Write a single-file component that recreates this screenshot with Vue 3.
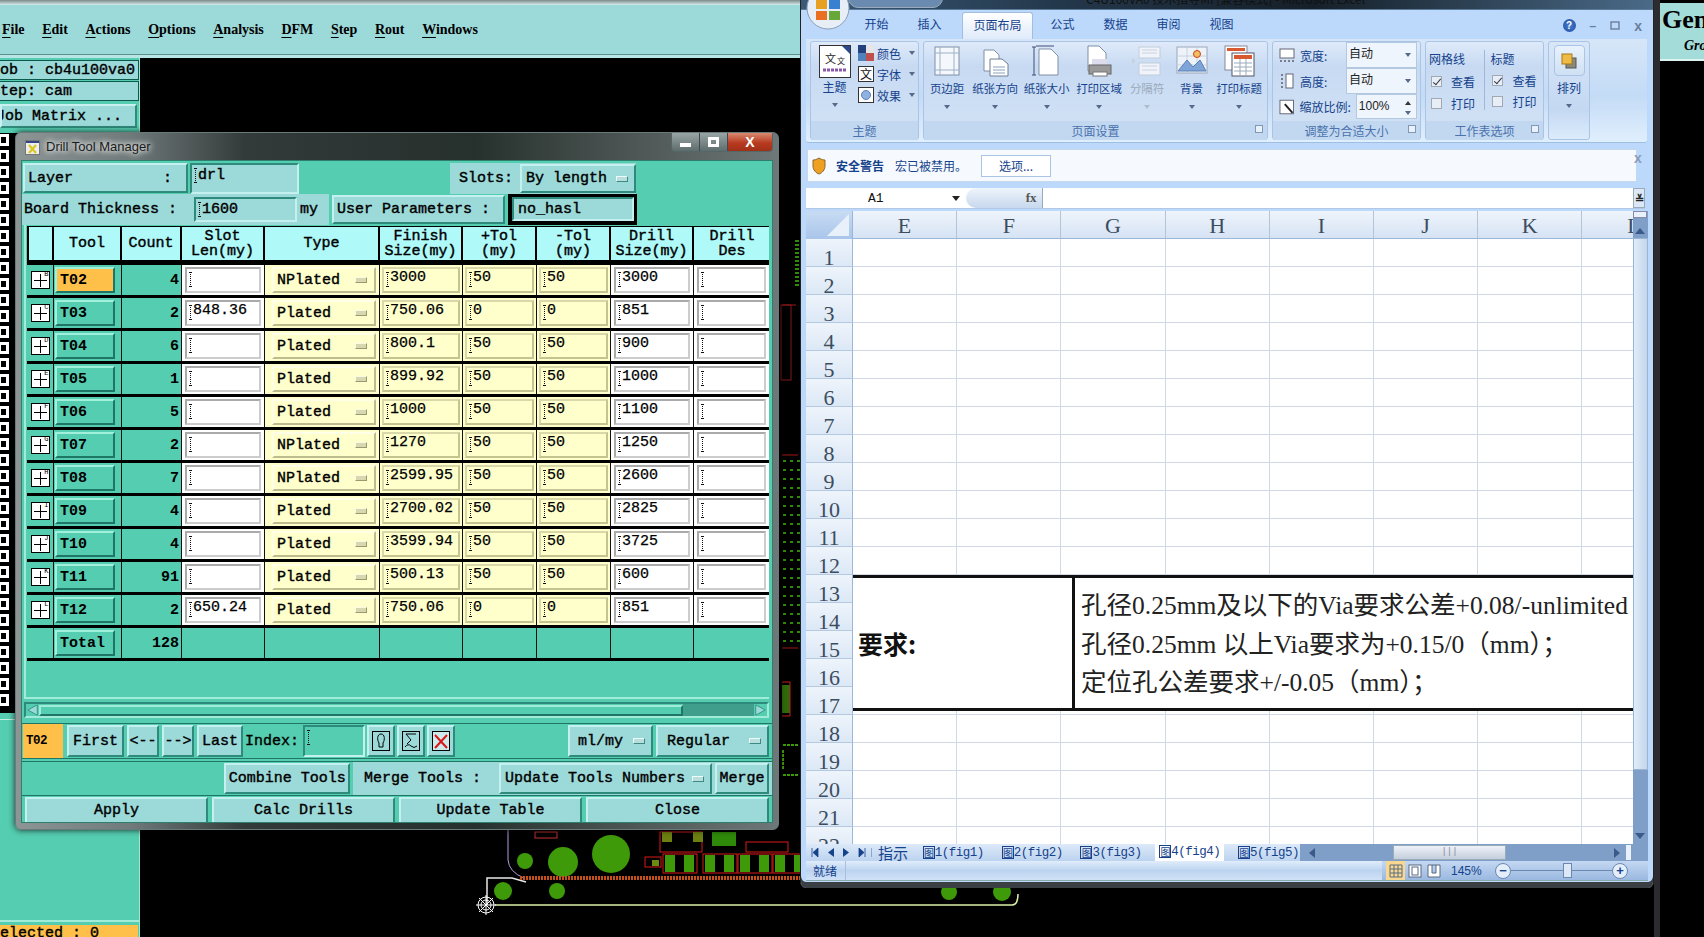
<script setup>
const menus = [['F','ile'],['E','dit'],['A','ctions'],['O','ptions'],['A','nalysis'],['D','FM'],['S','tep'],['R','out'],['W','indows']]
const squares = Array.from({ length: 36 }, (_, i) => i)
const rows = [
  ['T02','B',4,'','NPlated','3000','50','50','3000'],
  ['T03','C',2,'848.36','Plated','750.06','0','0','851'],
  ['T04','D',6,'','Plated','800.1','50','50','900'],
  ['T05','E',1,'','Plated','899.92','50','50','1000'],
  ['T06','F',5,'','Plated','1000','50','50','1100'],
  ['T07','G',2,'','NPlated','1270','50','50','1250'],
  ['T08','H',7,'','NPlated','2599.95','50','50','2600'],
  ['T09','I',4,'','Plated','2700.02','50','50','2825'],
  ['T10','J',4,'','Plated','3599.94','50','50','3725'],
  ['T11','K',91,'','Plated','500.13','50','50','600'],
  ['T12','L',2,'650.24','Plated','750.06','0','0','851'],
]
const pageButtons = [
  ['页边距', 'margin', 46], ['纸张方向', 'orient', 50], ['纸张大小', 'size', 53],
  ['打印区域', 'print', 52], ['分隔符', 'brk', 44], ['背景', 'bg', 45], ['打印标题', 'title', 50],
]
const cols = ['E','F','G','H','I','J','K','L']
const sheetRows = Array.from({ length: 22 }, (_, i) => i + 1)
const tabs = ['1(fig1)','2(fig2)','3(fig3)','4(fig4)','5(fig5)']
const pads = [663, 703, 738, 773]
const dots = []
for (let y = 460; y < 645; y += 9) for (let x = 783; x < 798; x += 7) dots.push([x, y])
const sideDots = []
for (let y = 240; y < 285; y += 4) sideDots.push(y)
</script>

<template>
  <div class="desktop">
    <svg class="pcb" width="1704" height="937" viewBox="0 0 1704 937">
      <circle cx="525" cy="861" r="8" fill="#3f9a0a"/>
      <circle cx="563" cy="862" r="15" fill="#3f9a0a"/>
      <circle cx="611" cy="854" r="19" fill="#3f9a0a"/>
      <circle cx="503" cy="891" r="9" fill="#3f9a0a"/>
      <circle cx="557" cy="891" r="8" fill="#3f9a0a"/>
      <circle cx="949" cy="892" r="8" fill="#3f9a0a"/>
      <circle cx="1002" cy="892" r="9" fill="#3f9a0a"/>
      <path d="M508 830V860Q509 872 524 878" fill="none" stroke="#b79be0" stroke-width="1"/>
      <path d="M487 905V878H512L526 882" fill="none" stroke="#e8e8e8" stroke-width="1.5"/>
      <path d="M495 905H1012Q1018 905 1018 894" fill="none" stroke="#dcf0a8" stroke-width="1.5"/>
      <line x1="520" y1="878" x2="800" y2="878" stroke="#c8501a" stroke-width="4" stroke-dasharray="2 1"/>
      <g stroke="#fff" stroke-width="1" fill="none">
        <circle cx="486" cy="905" r="5"/><circle cx="486" cy="905" r="8"/>
        <path d="M476 905H496M486 895V915M479 898L493 912M493 898L479 912"/>
      </g>
      <g v-for="x in pads" :key="x">
        <rect :x="x" y="854" width="34" height="19" fill="none" stroke="#d81818"/>
        <rect :x="x + 2" y="855" width="10" height="17" fill="#3f9a0a"/>
        <rect :x="x + 21" y="855" width="10" height="17" fill="#3f9a0a"/>
      </g>
      <rect x="535" y="832" width="22" height="6" fill="none" stroke="#c03030"/>
      <rect x="660" y="832" width="42" height="20" fill="none" stroke="#d81818"/>
      <rect x="662" y="832" width="10" height="10" fill="#6d7f10"/>
      <rect x="693" y="832" width="10" height="10" fill="#6d7f10"/>
      <rect x="712" y="832" width="24" height="14" fill="#2f8a0a"/>
      <rect x="746" y="842" width="42" height="10" fill="none" stroke="#d81818"/>
      <rect x="645" y="857" width="16" height="10" fill="none" stroke="#d81818"/>
      <rect x="652" y="860" width="7" height="6" fill="#6d8a10"/>
      <rect v-for="d in dots" :key="d[0] + '-' + d[1]" :x="d[0]" :y="d[1]" width="3" height="2" fill="#2f8a0a"/>
      <rect v-for="y in sideDots" :key="y" x="795" :y="y" width="4" height="2" fill="#2f8a0a"/>
      <path d="M782 305H796M782 455H798M782 648H798" stroke="#a01818" fill="none"/>
      <rect x="781" y="305" width="10" height="75" fill="none" stroke="#801818"/>
      <rect x="782" y="685" width="8" height="28" fill="#2f6a0a"/>
      <path d="M782 682H790V716H782" stroke="#c02020" fill="none"/>
      <path d="M783 745H798M783 775H798M783 750V770" stroke="#3f9a0a" stroke-width="2" stroke-dasharray="3 1" fill="none"/>
    </svg>

    <div class="gen">
      <div class="topstrip"></div>
      <nav class="menubar">
        <span v-for="(m, i) in menus" :key="i" class="menu"><span class="u">{{ m[0] }}</span>{{ m[1] }}</span>
      </nav>
      <aside class="side">
        <div class="jobs">
          <div class="joblabel"><span class="crop">Job : cb4u100va0</span></div>
          <div class="joblabel"><span class="crop">Step: cam</span></div>
          <div class="jobbtn"><span class="crop">Job Matrix ...</span></div>
        </div>
        <div class="strip"><i v-for="s in squares" :key="s" class="sq"></i></div>
        <div class="sidefill"></div>
        <div class="selected"><span class="crop">Selected : 0</span></div>
      </aside>
    </div>

    <section class="genhead">
      <div class="genhead-top">
        <div class="gentitle">Gen</div>
        <div class="gensub">Gro</div>
      </div>
    </section>

    <section class="drill">
      <header class="drill-title">
        <svg class="xicon" width="15" height="15" viewBox="0 0 15 15"><rect x=".5" y=".5" width="14" height="14" fill="#eee" stroke="#777"/><rect x="1" y="1" width="13" height="2" fill="#334488"/><path d="M4 5L11 13M11 5L4 13" stroke="#d8c820" stroke-width="2.2"/></svg>
        <span class="drill-name">Drill Tool Manager</span>
        <div class="winbtns">
          <span class="wb"><i class="wmin"></i></span>
          <span class="wb"><i class="wmax"></i></span>
          <span class="wb wclose">X</span>
        </div>
      </header>
      <div class="drill-body">
        <div class="line1">
          <button class="bev layer"><span>Layer</span><span>:</span></button>
          <div class="field drl"><i class="caret"></i>drl</div>
          <div class="slots">
            <span class="slots-l">Slots:</span>
            <div class="bev drop slots-d">By length<i class="mark"></i></div>
          </div>
        </div>
        <div class="line2">
          <div class="thick">
            <span class="thick-l">Board Thickness :</span>
            <div class="field thick-i"><i class="caret"></i>1600</div>
            <span class="thick-u">my</span>
          </div>
          <button class="bev userp">User Parameters :</button>
          <div class="hasl"><div class="field hasl-i">no_hasl</div></div>
        </div>

        <div class="tablewrap">
          <div class="grid head">
            <div class="h"></div><div class="h">Tool</div><div class="h">Count</div><div class="h">Slot<br>Len(my)</div><div class="h">Type</div>
            <div class="h">Finish<br>Size(my)</div><div class="h">+Tol<br>(my)</div><div class="h">-Tol<br>(my)</div><div class="h">Drill<br>Size(my)</div><div class="h">Drill<br>Des</div>
          </div>
          <div v-for="(r, i) in rows" :key="r[0]" class="grid row">
            <div class="c exp"><span class="plus"><b>{{ r[1] }}</b></span></div>
            <div class="c tool"><button class="toolbtn" :class="{ on: i === 0 }">{{ r[0] }}</button></div>
            <div class="c count">{{ r[2] }}</div>
            <div class="c white"><div class="inp"><i class="caret"></i>{{ r[3] }}</div></div>
            <div class="c yellow"><div class="typebtn">{{ r[4] }}<i class="mark"></i></div></div>
            <div class="c yellow"><div class="inp yi"><i class="caret"></i>{{ r[5] }}</div></div>
            <div class="c yellow"><div class="inp yi"><i class="caret"></i>{{ r[6] }}</div></div>
            <div class="c yellow"><div class="inp yi"><i class="caret"></i>{{ r[7] }}</div></div>
            <div class="c white"><div class="inp"><i class="caret"></i>{{ r[8] }}</div></div>
            <div class="c white"><div class="inp"><i class="caret"></i></div></div>
          </div>
          <div class="grid row totalrow">
            <div class="c"></div>
            <div class="c tool"><button class="toolbtn">Total</button></div>
            <div class="c count">128</div>
            <div class="c"></div><div class="c"></div><div class="c"></div><div class="c"></div><div class="c"></div><div class="c"></div><div class="c"></div>
          </div>
        </div>

        <div class="hscroll">
          <svg class="arr" width="12" height="12" viewBox="0 0 14 14"><path d="M12 1V13L1 7Z" fill="#9cd9d9" stroke="#2f8f7f"/></svg>
          <div class="thumb"></div>
          <div class="trough"></div>
          <svg class="arr" width="12" height="12" viewBox="0 0 14 14"><path d="M2 1V13L13 7Z" fill="#9cd9d9" stroke="#2f8f7f"/></svg>
        </div>

        <div class="nav">
          <div class="cur">T02</div>
          <button class="bev nb first">First</button>
          <button class="bev nb arrow">&lt;--</button>
          <button class="bev nb arrow">--&gt;</button>
          <button class="bev nb last">Last</button>
          <span class="idx">Index:</span>
          <div class="field idxi"><i class="caret"></i></div>
          <button class="bev ib"><svg width="18" height="20" viewBox="0 0 18 20"><rect x=".5" y=".5" width="17" height="19" fill="none" stroke="#000"/><path d="M9 3C5 3 5 9 7 12V16H11V12C13 9 13 3 9 3Z" fill="none" stroke="#000"/></svg></button>
          <button class="bev ib"><svg width="18" height="20" viewBox="0 0 18 20"><rect x=".5" y=".5" width="17" height="19" fill="none" stroke="#000"/><path d="M14 3H4L9 9L5 13M3 16Q6 12 9 15T15 15" fill="none" stroke="#000"/></svg></button>
          <button class="bev ib"><svg width="18" height="20" viewBox="0 0 18 20"><rect x=".5" y=".5" width="17" height="19" fill="#cfeaea" stroke="#000"/><path d="M3 4L15 17M15 4L3 17" stroke="#d81818" stroke-width="2"/></svg></button>
          <div class="navgap"></div>
          <div class="bev drop mlmy">ml/my<i class="mark"></i></div>
          <div class="bev drop regular">Regular<i class="mark"></i></div>
        </div>

        <div class="merge">
          <div class="mergegap"></div>
          <button class="bev combine">Combine Tools</button>
          <div class="mergezone">
            <span class="mergel">Merge Tools :</span>
            <div class="bev drop update">Update Tools Numbers<i class="mark"></i></div>
            <button class="bev mergeb">Merge</button>
          </div>
        </div>

        <div class="actions">
          <button class="bev act">Apply</button>
          <button class="bev act">Calc Drills</button>
          <button class="bev act">Update Table</button>
          <button class="bev act">Close</button>
        </div>
      </div>
    </section>

    <section class="excel">
      <div class="xtitle">
        <div class="qat"></div>
        <span class="xname">C4U100VA0 技术指导MI [兼容模式] - Microsoft Excel</span>
      </div>
      <svg class="orb" width="44" height="34" viewBox="0 0 44 34">
        <circle cx="22" cy="8" r="21" fill="#e8eef6" stroke="#8a9fb8"/>
        <rect x="10" y="0" width="11" height="9" fill="#e8a020"/><rect x="23" y="0" width="11" height="9" fill="#3a80d0"/>
        <rect x="10" y="11" width="11" height="9" fill="#e87020"/><rect x="23" y="11" width="11" height="9" fill="#68a838"/>
      </svg>
      <div class="xtabs">
        <span class="xt t1">开始</span><span class="xt">插入</span><span class="xt active">页面布局</span><span class="xt">公式</span><span class="xt">数据</span><span class="xt">审阅</span><span class="xt">视图</span>
        <div class="xtabs-r">
          <span class="help">?</span><span class="mini">–</span>
          <svg width="10" height="9" viewBox="0 0 10 9"><rect x="1" y="1" width="8" height="7" fill="none" stroke="#6a7f9a" stroke-width="1.4"/></svg>
          <span class="mini xx">x</span>
        </div>
      </div>

      <div class="ribbon">
        <div class="rg g1">
          <div class="rb themeb">
            <div class="bigcol">
              <svg width="32" height="33" viewBox="0 0 32 33"><rect x=".5" y=".5" width="31" height="32" fill="#fff" stroke="#333"/><path d="M23 1H31V9Z" fill="#2a4a8c"/><text x="6" y="18" font-size="11" fill="#222" font-family="Noto Sans CJK SC">文</text><text x="18" y="19" font-size="8" fill="#222" font-family="Noto Sans CJK SC">文</text><path d="M4 25H28" stroke="#8a5aa8" stroke-width="3" stroke-dasharray="3 1"/></svg>
              <span class="lbl l1">主题</span><i class="dn"></i>
            </div>
            <div class="themelist">
              <div class="ti"><svg width="16" height="16" viewBox="0 0 16 16"><rect width="8" height="8" fill="#24417e"/><rect x="8" width="8" height="8" fill="#e6e6e6"/><rect y="8" width="8" height="8" fill="#4f81bd"/><rect x="8" y="8" width="8" height="8" fill="#c0504d"/></svg><span>颜色</span><i class="dn sm"></i></div>
              <div class="ti"><svg width="16" height="16" viewBox="0 0 16 16"><rect x=".5" y=".5" width="15" height="15" fill="#fff" stroke="#333"/><text x="2" y="13" font-size="12" fill="#111" font-family="Noto Sans CJK SC">文</text></svg><span>字体</span><i class="dn sm"></i></div>
              <div class="ti"><svg width="16" height="16" viewBox="0 0 16 16"><rect x=".5" y=".5" width="15" height="15" fill="#fff" stroke="#333"/><circle cx="8" cy="8" r="4.5" fill="#8fb2e0" stroke="#5b7fb5"/></svg><span>效果</span><i class="dn sm"></i></div>
            </div>
          </div>
          <div class="gl">主题</div>
        </div>

        <div class="rg g2">
          <div class="rb pages">
            <div v-for="b in pageButtons" :key="b[1]" class="pb" :class="[b[1], { off: b[1] === 'brk' }]">
              <svg width="34" height="32" viewBox="0 0 34 32">
                <g v-if="b[1] === 'margin'"><rect x="5" y="2" width="24" height="28" fill="#f4f8fd" stroke="#7f8fa6"/><path d="M5 8H29M5 25H29M10 2V30M24 2V30" stroke="#9fb0c6"/></g>
                <g v-else-if="b[1] === 'orient'"><path d="M6 5H16L21 10V26H6Z" fill="#fff" stroke="#7f8fa6"/><path d="M12 14H24L30 19V31H12Z" fill="#fff" stroke="#6f7f96"/><path d="M15 22H27M15 25H27M15 28H27" stroke="#8aa0bd"/></g>
                <g v-else-if="b[1] === 'size'"><path d="M4 2V30M2 2H6M2 30H6M6 1H24" stroke="#3a4f78"/><path d="M9 4H21L28 11V30H9Z" fill="#fff" stroke="#7f8fa6"/></g>
                <g v-else-if="b[1] === 'print'"><path d="M6 1H17L24 8V26H6Z" fill="#fff" stroke="#7f8fa6"/><rect x="10" y="14" width="15" height="10" fill="#dde"/><rect x="7" y="20" width="22" height="9" fill="#9a9a9a" stroke="#666"/><rect x="11" y="27" width="14" height="4" fill="#fff" stroke="#777"/></g>
                <g v-else-if="b[1] === 'brk'"><path d="M9 2H30V13H9ZM9 18H30V30H9Z" fill="#f0f4fa" stroke="#c0ccd8"/><path d="M12 5H27M12 8H27M12 21H27M12 25H27" stroke="#c8d2de"/><path d="M2 13L6 16L2 19Z" fill="#c8d2de"/></g>
                <g v-else-if="b[1] === 'bg'"><rect x="2" y="2" width="30" height="26" fill="#eef3f9" stroke="#9aa8ba"/><path d="M2 11H32M2 20H32M12 2V28M22 2V28" stroke="#c8d2e0"/><circle cx="22" cy="9" r="3.5" fill="#f0c060" stroke="#d04020"/><path d="M3 26L12 15L18 22L25 15L31 26Z" fill="#7fa5d8" stroke="#5b7fb5"/></g>
                <g v-else><rect x="3" y="1" width="22" height="24" fill="#fff" stroke="#889"/><rect x="5" y="3" width="18" height="3" fill="#d85830"/><rect x="10" y="8" width="22" height="23" fill="#fff" stroke="#556"/><rect x="12" y="10" width="18" height="4" fill="#d85830"/><path d="M12 18H30M12 22H30M12 26H30M18 14V30M24 14V30" stroke="#9ab"/></g>
              </svg>
              <span class="lbl">{{ b[0] }}</span><i class="dn"></i>
            </div>
          </div>
          <div class="gl">页面设置<i class="launch"></i></div>
        </div>

        <div class="rg g3">
          <div class="rb fit">
            <div class="fr fr1">
              <svg width="16" height="14" viewBox="0 0 16 14"><rect x="1" y="1" width="14" height="9" fill="#fff" stroke="#667"/><path d="M1 13H15" stroke="#222" stroke-dasharray="2 2"/></svg>
              <span class="ft">宽度:</span><div class="sel">自动<i class="dn sm"></i></div>
            </div>
            <div class="fr fr1">
              <svg width="16" height="16" viewBox="0 0 16 16"><rect x="7" y="1" width="7" height="14" fill="#fff" stroke="#667"/><path d="M3 1V15" stroke="#222" stroke-dasharray="2 2"/></svg>
              <span class="ft">高度:</span><div class="sel">自动<i class="dn sm"></i></div>
            </div>
            <div class="fr fr3">
              <svg width="16" height="16" viewBox="0 0 16 16"><rect x="1" y="1" width="14" height="14" fill="#fff" stroke="#667"/><path d="M6 5L14 14" stroke="#222" stroke-width="2"/></svg>
              <span class="ft">缩放比例:</span><div class="sel pct">100%<span class="spin"><i class="up"></i><i class="dn sm"></i></span></div>
            </div>
          </div>
          <div class="gl">调整为合适大小<i class="launch"></i></div>
        </div>

        <div class="rg g4">
          <div class="rb opts">
            <div class="oc">
              <span class="ot">网格线</span>
              <span class="ck on"><i></i>查看</span>
              <span class="ck"><i></i>打印</span>
            </div>
            <div class="oc oc2">
              <span class="ot">标题</span>
              <span class="ck on"><i></i>查看</span>
              <span class="ck"><i></i>打印</span>
            </div>
          </div>
          <div class="gl">工作表选项<i class="launch"></i></div>
        </div>

        <div class="rg g5">
          <div class="arrange">
            <div class="arrange-b"><svg width="16" height="16" viewBox="0 0 16 16"><rect x="5" y="5" width="10" height="10" fill="#8a8a7a" stroke="#555"/><rect x="1" y="1" width="10" height="10" fill="#eebb44" stroke="#a87818"/></svg></div>
            <span class="lbl">排列</span><i class="dn"></i>
          </div>
        </div>
      </div>

      <div class="secbar">
        <svg width="14" height="18" viewBox="0 0 14 18"><path d="M7 1C4 3 2 3 1 3V9C1 13 4 16 7 17C10 16 13 13 13 9V3C12 3 10 3 7 1Z" fill="#f0a020" stroke="#8a6a30"/></svg>
        <b class="sec1">安全警告</b><span class="sec2">宏已被禁用。</span>
        <span class="secbtn">选项...</span>
      </div>
      <span class="secx">x</span>

      <div class="formula">
        <span class="a1">A1</span><i class="fdrop"></i>
        <span class="fx"><em>fx</em></span>
        <span class="fexp">≚</span>
      </div>

      <div class="sheet">
        <div class="cells">
          <div class="colhead">
            <div class="corner"><i></i></div>
            <div v-for="c in cols" :key="c" class="ch">{{ c }}</div>
          </div>
          <div v-for="n in sheetRows" :key="n" class="sr">
            <div class="rh">{{ n }}</div>
            <div v-for="c in cols" :key="c" class="sc"></div>
          </div>
          <div class="picture">
            <div class="pic-l">要求:</div>
            <div class="pic-r">
              <div>孔径0.25mm及以下的Via要求公差+0.08/-unlimited</div>
              <div>孔径0.25mm 以上Via要求为+0.15/0（mm）；</div>
              <div>定位孔公差要求+/-0.05（mm）；</div>
            </div>
          </div>
        </div>
        <div class="vscroll">
          <i class="vsplit"></i>
          <i class="vup"></i>
          <div class="vthumb"></div>
          <div class="vtrack"></div>
          <i class="vdown"></i>
        </div>
      </div>

      <div class="tabbar">
        <div class="tabnav">
          <svg width="8" height="9" viewBox="0 0 8 9"><path d="M1 0V9M7 0V9L2 4.5Z" fill="#15428b" stroke="#15428b" stroke-width=".8"/></svg>
          <svg width="6" height="9" viewBox="0 0 6 9"><path d="M6 0V9L0 4.5Z" fill="#15428b"/></svg>
          <svg width="6" height="9" viewBox="0 0 6 9"><path d="M0 0V9L6 4.5Z" fill="#15428b"/></svg>
          <svg width="8" height="9" viewBox="0 0 8 9"><path d="M7 0V9M1 0V9L6 4.5Z" fill="#15428b" stroke="#15428b" stroke-width=".8"/></svg>
        </div>
        <span class="stab first-tab">指示</span>
        <span v-for="(t, i) in tabs" :key="t" class="stab" :class="{ sel4: i === 3 }"><span class="tg">图</span>{{ t }}</span>
        <div class="hs">
          <i class="hl"></i>
          <div class="hthumb">|||</div>
          <i class="hr"></i>
          <i class="hsplit"></i>
        </div>
      </div>

      <div class="status">
        <span class="ready">就绪</span>
        <div class="stat-r">
          <div class="views">
            <span class="vw on"><svg width="14" height="14" viewBox="0 0 14 14"><path d="M1 1H13V13H1ZM1 5H13M1 9H13M5 1V13M9 1V13" fill="none" stroke="#5a6a80"/></svg></span>
            <span class="vw"><svg width="14" height="14" viewBox="0 0 14 14"><rect x="1" y="1" width="12" height="12" fill="#fff" stroke="#5a6a80"/><rect x="4" y="3" width="6" height="8" fill="none" stroke="#5a6a80"/></svg></span>
            <span class="vw"><svg width="14" height="14" viewBox="0 0 14 14"><path d="M1 1H13V13H1ZM5 1V9H9V1" fill="#fff" stroke="#5a6a80"/></svg></span>
          </div>
          <span class="zoom">145%</span>
          <span class="zb">−</span>
          <div class="slider"><i></i></div>
          <span class="zb zb2">+</span>
        </div>
      </div>
    </section>
  </div>
</template>

<style>
html, body { margin: 0; background: #000; overflow: hidden; }
</style>

<style scoped>
* { box-sizing: border-box; }
i, em { font-style: normal; }
button { font: inherit; color: inherit; padding: 0; margin: 0; }
.desktop { position: relative; width: 1704px; height: 937px; overflow: hidden; background: #000; font-family: "Liberation Mono", monospace; font-weight: 400; -webkit-text-stroke: .4px #000; font-size: 15px; color: #000; }
.pcb { position: absolute; left: 0; top: 0; }

/* main CAM window */
.gen { position: absolute; left: 0; top: 0; width: 800px; height: 937px; display: flex; flex-direction: column; }
.topstrip { height: 5px; background: linear-gradient(#7a8a8a, #d7ecec); }
.menubar { height: 53px; background: #9cd9d9; border-bottom: 3px solid #b8e6e6; box-shadow: inset 0 -1px 0 #5e8f8f; display: flex; align-items: center; gap: 17.6px; padding: 0 0 0 2px; font-family: "Liberation Serif", serif; font-size: 14px; font-weight: 700; -webkit-text-stroke: 0; }
.menu { white-space: nowrap; }
.u { text-decoration: underline; text-underline-offset: 3px; }
.side { width: 140px; flex: 1; display: flex; flex-direction: column; background: #55cdb0; border-right: 1px solid #9ee6d2; overflow: hidden; }
.jobs { height: 75px; padding-top: 2px; display: flex; flex-direction: column; gap: 1px; }
.joblabel { height: 20px; background: #9cd9d9; border: 1px solid #0d5a4c; border-left: 0; line-height: 19px; overflow: hidden; white-space: nowrap; }
.jobbtn { height: 24px; margin-top: 2px; width: 137px; background: #9cd9d9; border: 2px solid; border-color: #c8f0f0 #2e8a7a #2e8a7a #c8f0f0; line-height: 21px; overflow: hidden; white-space: nowrap; }
.crop { display: inline-block; margin-left: -9px; }
.jobbtn .crop { margin-left: -6px; }
.strip { height: 580px; background: #000; display: flex; flex-direction: column; gap: 4px; padding-top: 1px; overflow: hidden; }
.sq { display: block; width: 11px; height: 12px; border: 3px solid #fff; margin-left: -2px; flex: none; box-shadow: inset 0 0 0 1px #000; background: #000; }
.sidefill { flex: 1; border-top: 1px solid #c4f0e4; margin-top: 6px; border-bottom: 2px solid #a0ecd8; }
.selected { height: 12px; width: 138px; margin-top: 3px; background: #ffc04a; line-height: 17px; overflow: hidden; white-space: nowrap; }

/* right genesis header */
.genhead { position: absolute; left: 1654px; top: 0; width: 50px; height: 937px; border-left: 6px solid #2c2c30; background: #000; }
.genhead-top { height: 58px; margin-top: 3px; background: #a3dcd9; overflow: hidden; white-space: nowrap; font-family: "Liberation Serif", serif; border-bottom: 2px solid #ddf3f0; -webkit-text-stroke: 0; }
.gentitle { font-size: 26px; font-weight: 700; margin-left: 2px; line-height: 34px; }
.gensub { font-size: 14px; font-style: italic; font-weight: 700; margin-left: 24px; line-height: 17px; }

/* drill tool window */
.drill { position: absolute; left: 15px; top: 132px; width: 764px; height: 698px; border-radius: 6px; border: 1px solid #6a7a7a; background: linear-gradient(90deg, #8d9595 0, #707a7a 15%, #333a3a 30%, #26302c 60%, #6f7878 100%); padding: 0 5px 6px 5px; display: flex; flex-direction: column; box-shadow: 0 0 6px rgba(0,0,0,.8); }
.drill-title { height: 27px; flex: none; display: flex; align-items: flex-start; padding: 7px 0 0 4px; gap: 6px; position: relative; font-family: "Liberation Sans", sans-serif; font-weight: 400; font-size: 13px; -webkit-text-stroke: 0; }
.drill-name { color: #1a1a1a; text-shadow: 0 0 6px #fff, 0 0 6px #fff; margin-top: -1px; }
.winbtns { position: absolute; right: 0; top: 0; display: flex; height: 19px; border: 1px solid #566; border-top: 0; border-radius: 0 0 4px 4px; overflow: hidden; }
.wb { width: 28px; display: flex; align-items: center; justify-content: center; background: linear-gradient(#9aa6a6, #5d6c6c); border-right: 1px solid #445; }
.wclose { width: 44px; background: linear-gradient(#d88a70, #b83a20 55%, #a03018); color: #fff; font: 700 14px "Liberation Sans", sans-serif; border: 0; }
.wmin { width: 11px; height: 4px; background: #fff; margin-top: 6px; }
.wmax { width: 11px; height: 10px; border: 3px solid #fff; }
.drill-body { flex: 1; min-height: 0; background: #55cdb0; display: flex; flex-direction: column; border: 1px solid #2f7f6f; overflow: hidden; }
.bev { background: #9cd9d9; border: 2px solid; border-color: #c4f0f0 #2e8a7a #2e8a7a #c4f0f0; display: flex; align-items: center; }
.field { background: #9cd9d9; border: 2px solid; border-color: #2e8a7a #c4f0f0 #c4f0f0 #2e8a7a; position: relative; padding-left: 6px; line-height: 21px; }
.caret { position: absolute; left: 3px; top: 3px; height: 15px; width: 0; border-left: 1px dotted #111; }
.caret::before, .caret::after { content: ""; position: absolute; left: -2px; width: 3px; height: 1px; background: #111; }
.caret::before { top: 0; } .caret::after { bottom: 0; }
.line1 { height: 33px; flex: none; display: flex; padding: 2px 0 0 1px; }
.layer { width: 165px; height: 30px; justify-content: space-between; padding: 0 14px 0 3px; }
.drl { width: 109px; height: 31px; margin-left: 2px; }
.slots { width: 186px; margin-left: 151px; height: 31px; background: #9cd9d9; display: flex; align-items: center; padding-left: 9px; gap: 7px; }
.slots-d { width: 116px; height: 29px; padding-left: 5px; }
.drop { position: relative; justify-content: flex-start; white-space: nowrap; padding-left: 4px; }
.mark { display: block; position: absolute; right: 6px; top: 50%; margin-top: -3px; width: 12px; height: 6px; background: #b8dede; border: 1px solid; border-color: #eefafa #3f8a80 #3f8a80 #eefafa; }
.line2 { height: 31px; flex: none; display: flex; align-items: stretch; }
.thick { width: 307px; background: #9cd9d9; display: flex; align-items: center; padding-left: 2px; }
.thick-l { width: 170px; white-space: nowrap; }
.thick-i { width: 103px; height: 25px; }
.thick-u { margin-left: 3px; }
.userp { width: 173px; margin: 1px 0 1px 3px; padding-left: 3px; white-space: nowrap; }
.hasl { width: 129px; margin-left: 3px; background: #000; padding: 3px 3px 4px 4px; }
.hasl-i { height: 100%; padding-left: 4px; }
.tablewrap { height: 474px; flex: none; padding-left: 1px; margin-right: 3px; border-bottom: 2px solid #a0ecd8; border-left: 2px solid #a0ecd8; margin-left: 2px; padding-top: 1px; overflow: hidden; }
.grid { display: grid; grid-template-columns: 27px 68px 60px 83px 115px 83px 74px 74px 83px 76px; }
.head { height: 36px; background: #000; padding: 1px 0 2px 0; gap: 0; width: 743px; }
.h { background: #aff9f9; border-right: 2px solid #000; display: flex; align-items: center; justify-content: center; text-align: center; line-height: 15px; white-space: nowrap; }
.h:first-child { border-left: 2px solid #000; }
.h:last-child { border-right: 0; }
.row { height: 33px; border-top: 3px solid #000; width: 743px; }
.c { border-right: 1px solid #111; position: relative; min-width: 0; overflow: hidden; }
.exp { display: flex; align-items: center; justify-content: center; }
.plus { position: relative; display: block; width: 19px; height: 18px; background: linear-gradient(#000,#000) 50% 50%/13px 1px no-repeat, linear-gradient(#000,#000) 50% 50%/1px 13px no-repeat, #fff; border: 1px solid #000; -webkit-text-stroke: 0; }
.plus b { position: absolute; right: 0; top: -2px; font-size: 7px; line-height: 8px; font-weight: 400; }
.tool { padding: 2px 6px 2px 1px; font-weight: 700; -webkit-text-stroke: 0; }
.toolbtn { display: flex; align-items: center; width: 100%; height: 100%; background: #55cdb0; border: 2px solid; border-color: #a0f0dc #1f7566 #1f7566 #a0f0dc; padding-left: 3px; }
.toolbtn.on { background: #ffc04a; }
.count { display: flex; align-items: center; justify-content: flex-end; padding-right: 2px; font-weight: 700; -webkit-text-stroke: 0; }
.white { background: #fff; padding: 2px 3px; }
.yellow { background: #ffffcc; padding: 2px; }
.inp { height: 100%; position: relative; padding-left: 6px; border: 2px solid; border-color: #aaa #ccc #ccc #aaa; line-height: 17px; white-space: nowrap; overflow: hidden; -webkit-text-stroke: .25px #000; }
.yi { border-color: #d8d8a8 #c4c490 #c4c490 #d8d8a8; }
.typebtn { height: 100%; margin: 0 1px 0 5px; position: relative; display: flex; align-items: center; padding-left: 3px; border: 2px solid; border-color: #ffffe8 #bcbc8e #bcbc8e #ffffe8; }
.typebtn .mark { background: #d8d8b0; right: 7px; border-color: #fafae0 #9a9a70 #9a9a70 #fafae0; }
.totalrow { border-bottom: 3px solid #000; height: 36px; }
.hscroll { height: 16px; flex: none; margin: 3px 3px 0 2px; padding: 0 1px; display: flex; align-items: center; border: 2px solid #2e8a7a; border-bottom-color: #a0ecd8; border-right-color: #a0ecd8; }
.arr { flex: none; }
.thumb { width: 644px; height: 11px; background: #55cdb0; border: 2px solid; border-color: #a0ecd8 #1f7566 #1f7566 #a0ecd8; flex: none; }
.trough { flex: 1; height: 12px; background: #3f9f8c; }
.nav { height: 36px; flex: none; margin-top: 5px; display: flex; align-items: stretch; background: #55cdb0; border-top: 1px solid #1f7566; border-bottom: 1px solid #1f7566; padding-left: 1px; }
.cur { width: 40px; background: #ffc04a; font-size: 12.5px; display: flex; align-items: center; padding-left: 3px; margin-right: 4px; font-weight: 700; -webkit-text-stroke: 0; letter-spacing: -.5px; }
.nb { justify-content: center; margin: 1px 3px 1px 0; }
.first { width: 57px; } .arrow { width: 32px; } .last { width: 46px; margin-right: 2px; }
.idx { align-self: center; width: 58px; white-space: nowrap; }
.idxi { width: 62px; margin: 1px 2px 1px 0; background: #55cdb0; }
.ib { width: 28px; margin: 1px 2px 1px 0; justify-content: center; }
.navgap { flex: 1; }
.mlmy { width: 85px; margin: 1px 3px 1px 0; padding-left: 8px; }
.regular { width: 113px; margin: 1px 3px 1px 0; padding-left: 9px; }
.merge { height: 34px; flex: none; margin-top: 2px; display: flex; border-top: 1px solid #1f7566; padding-left: 1px; }
.mergegap { width: 200px; }
.combine { width: 126px; margin: 1px 3px 1px 2px; justify-content: center; white-space: nowrap; }
.mergezone { flex: 1; display: flex; align-items: stretch; background: #9cd9d9; padding: 1px 3px 1px 11px; }
.mergel { align-self: center; width: 135px; white-space: nowrap; }
.update { width: 213px; padding-left: 4px; }
.mergeb { margin-left: 3px; width: 54px; justify-content: center; }
.actions { height: 30px; flex: none; display: flex; gap: 4px; padding: 1px 3px 1px 3px; background: #55cdb0; border-top: 1px solid #1f7566; }
.act { flex: 1; justify-content: center; }

/* excel */
.excel { position: absolute; left: 800px; top: 0; width: 854px; height: 888px; background: #bcd8fb; border: 1px solid #222; border-top: 0; border-bottom: 0; border-radius: 0 0 6px 6px; padding: 0 5px 6px 5px; display: flex; flex-direction: column; font-family: "Noto Sans CJK SC", sans-serif; font-weight: 400; -webkit-text-stroke: 0; font-size: 12px; color: #15428b; box-shadow: inset 0 -6px 0 #3a3f44; }
.xtitle { height: 10px; flex: none; margin: 0 -5px; background: linear-gradient(90deg, #3a5a78, #24384c 30%, #151f28 60%, #4a6a88); position: relative; overflow: hidden; border-bottom: 1px solid #5a7a9a; }
.qat { position: absolute; left: 47px; top: -12px; width: 95px; height: 20px; border: 1px solid #9ab; border-radius: 10px; background: #6a8ab0; }
.xname { position: absolute; left: 285px; top: -10px; font-size: 12px; color: #111; white-space: nowrap; }
.orb { position: absolute; left: 5px; top: 0; }
.xtabs { height: 29px; flex: none; display: flex; align-items: flex-end; padding-left: 44px; font-size: 12px; position: relative; }
.xt { width: 53px; height: 27px; text-align: center; line-height: 24px; flex: none; }
.xt.active { width: 71px; background: linear-gradient(#fff, #dfeafa); border: 1px solid #9fbee0; border-bottom: 0; border-radius: 3px 3px 0 0; margin: 0 3px 0 6px; }
.xtabs-r { margin-left: auto; display: flex; align-items: center; gap: 14px; height: 27px; padding-right: 6px; color: #6a7f9a; }
.help { width: 13px; height: 13px; border-radius: 50%; background: radial-gradient(#4a80d0, #1a4a9a); color: #fff; font: 700 10px/13px "Liberation Sans", sans-serif; text-align: center; }
.mini { font: 700 12px "Liberation Sans", sans-serif; }
.xx { font-size: 14px; }
.ribbon { height: 104px; flex: none; display: flex; gap: 4px; padding: 2px 0 3px 4px; margin-right: 1px; background: linear-gradient(#d6e6f8, #c4dbf6 55%, #e0effd); border-radius: 0 0 3px 3px; border-bottom: 1px solid #9fbfe0; }
.rg { height: 99px; border: 1px solid #a9c4e4; border-radius: 3px; background: linear-gradient(#dfeafa, #c7daf2 25%, #cfe0f5 75%); display: flex; flex-direction: column; flex: none; position: relative; }
.g1 { width: 109px; } .g2 { width: 345px; } .g3 { width: 149px; } .g4 { width: 119px; } .g5 { width: 42px; background: linear-gradient(#d8e6f8, #c4d8f2 70%, #dcecfc); }
.rb { height: 79px; flex: none; }
.gl { height: 19px; background: #c2d8f1; color: #4a72ac; text-align: center; line-height: 19px; font-size: 12px; position: relative; border-radius: 0 0 3px 3px; }
.launch { position: absolute; right: 4px; top: 4px; width: 8px; height: 8px; border: 1px solid #7f98b8; background: #e8f0fa; }
.lbl { display: block; font-size: 12px; line-height: 17px; white-space: nowrap; }
.dn { display: block; width: 0; height: 0; border: 3px solid transparent; border-top: 4px solid #56698a; border-bottom: 0; margin: 8px auto 0; }
.dn.sm { margin: 0 0 0 5px; }
.themeb { display: flex; padding: 3px 0 0 7px; }
.bigcol { width: 33px; display: flex; flex-direction: column; align-items: center; }
.l1 { margin-top: 0; }
.themelist { margin-left: 7px; display: flex; flex-direction: column; gap: 5px; }
.ti { height: 16px; display: flex; align-items: center; gap: 3px; white-space: nowrap; }
.pages { display: flex; padding-top: 3px; }
.pb { display: flex; flex-direction: column; align-items: center; flex: none; }
.margin { width: 46px; } .orient { width: 50px; } .size { width: 53px; } .print { width: 52px; } .brk { width: 44px; } .bg { width: 45px; } .title { width: 50px; }
.pb .lbl { margin-top: 3px; letter-spacing: -.1px; font-size: 11.5px; }
.off .lbl { color: #9aaabc; } .off .dn { border-top-color: #b0bccc; }
.fit { padding: 0 3px 0 6px; display: flex; flex-direction: column; }
.fr { display: flex; align-items: center; gap: 5px; }
.fr1 { height: 26px; }
.fr3 { height: 25px; }
.ft { white-space: nowrap; }
.sel { margin-left: auto; width: 71px; height: 100%; background: #eef5fd; color: #222; border: 1px solid #b4c8e0; display: flex; align-items: flex-start; justify-content: space-between; padding: 1px 5px 0 2px; }
.sel .dn { margin-top: 9px; }
.pct { width: 63px; font: 400 12px "Liberation Sans", sans-serif; line-height: 20px; }
.spin { display: flex; flex-direction: column; gap: 6px; padding-top: 5px; }
.spin .dn { margin: 0; }
.up { display: block; width: 0; height: 0; border: 3px solid transparent; border-bottom: 4px solid #333; border-top: 0; }
.opts { display: flex; padding: 8px 0 0 3px; }
.oc { width: 57px; display: flex; flex-direction: column; gap: 4px; }
.oc2 { border-left: 1px solid #9fb8d8; padding-left: 5px; height: 60px; width: 60px; }
.ot { height: 18px; line-height: 18px; white-space: nowrap; }
.ck { display: flex; align-items: center; gap: 9px; height: 18px; white-space: nowrap; }
.ck i { width: 11px; height: 11px; border: 1px solid #a0a8b4; background: #e8eef6; display: block; position: relative; margin-left: 2px; }
.ck.on i::after { content: ""; position: absolute; left: 3px; top: 0; width: 3px; height: 7px; border: solid #334; border-width: 0 1.5px 1.5px 0; transform: rotate(40deg); }
.arrange { display: flex; flex-direction: column; align-items: center; padding-top: 3px; }
.arrange-b { width: 31px; height: 31px; border: 1px solid #a9c4e4; border-radius: 4px; background: linear-gradient(#e8f2fc, #cfe0f4); display: flex; align-items: center; justify-content: center; margin-bottom: 3px; }
.secbar { height: 33px; flex: none; margin: 6px 11px 1px 1px; background: #f6fafe; border: 1px solid #c4d8ee; display: flex; align-items: center; padding-left: 4px; }
.sec1 { margin-left: 10px; font-weight: 700; font-size: 12px; }
.sec2 { margin-left: 11px; white-space: nowrap; font-size: 12px; }
.secbtn { margin-left: 14px; width: 70px; height: 22px; border: 1px solid #a9c4e4; background: #fff; text-align: center; line-height: 20px; color: #15428b; }
.secx { position: absolute; left: 833px; top: 150px; color: #8a9cb4; font: 700 14px "Liberation Sans", sans-serif; }
.formula { height: 21px; flex: none; margin: 5px 3px 0 0; background: #fff; display: flex; align-items: center; position: relative; border-bottom: 1px solid #b0c8e4; }
.a1 { font: 400 13px/21px "Liberation Mono", monospace; color: #111; margin-left: 62px; padding-top: 1px; }
.fdrop { margin-left: 68px; width: 0; height: 0; border: 4px solid transparent; border-top: 5px solid #222; border-bottom: 0; }
.fx { margin-left: 6px; width: 77px; height: 100%; background: linear-gradient(#eef4fb, #c8d8ee); border-right: 1px solid #9ab; border-radius: 10px 0 0 10px; text-align: right; padding-right: 5px; font: italic 700 13px "Liberation Serif", serif; color: #555; line-height: 19px; }
.fexp { position: absolute; right: 0; top: 0; width: 12px; height: 20px; background: #dce8f6; color: #222; font: 700 11px/20px "Liberation Sans", sans-serif; text-align: center; border: 1px solid #9ab; }
.sheet { height: 633px; flex: none; margin-top: 2px; display: flex; }
.cells { position: relative; width: 827px; overflow: hidden; background: #fff; font-family: "Liberation Serif", serif; color: #3c4d60; }
.colhead { display: flex; height: 28px; }
.corner { width: 47px; flex: none; background: linear-gradient(#c8dbf3, #a9c5ea); border-right: 1px solid #9ab6d8; position: relative; overflow: hidden; }
.corner i { position: absolute; right: 3px; bottom: 3px; width: 0; height: 0; border-left: 22px solid transparent; border-bottom: 22px solid #e8f0fa; }
.ch { width: 104.2px; flex: none; background: linear-gradient(#eef4fb, #d6e3f4); border-right: 1px solid #b4c4d8; border-bottom: 1px solid #9ab6d8; text-align: center; font-size: 22px; line-height: 30px; }
.sr { display: flex; height: 28px; }
.rh { width: 47px; flex: none; background: linear-gradient(#eef4fb, #dce8f6); border-right: 1px solid #9ab6d8; border-bottom: 1px solid #b4c8e0; text-align: center; font-size: 22px; line-height: 37px; }
.sc { width: 104.2px; flex: none; border-right: 1px solid #d0d7e5; border-bottom: 1px solid #d0d7e5; }
.picture { position: absolute; left: 47px; top: 364px; width: 780px; height: 136px; background: #fff; border-top: 3px solid #111; border-bottom: 3px solid #111; display: flex; color: #222; font-family: "Liberation Serif", "Noto Sans CJK SC", serif; }
.pic-l { width: 222px; border-right: 3px solid #111; display: flex; align-items: center; padding-left: 5px; font: 700 25px "Noto Sans CJK SC", sans-serif; color: #111; }
.pic-r { flex: 1; padding: 9px 0 0 6px; font-size: 25.5px; line-height: 38.5px; white-space: nowrap; overflow: hidden; }
.vscroll { width: 16px; flex: none; display: flex; flex-direction: column; align-items: center; background: #7f9ec8; margin-left: -1px; }
.vsplit { width: 14px; height: 7px; background: #e8f0fa; border: 1px solid #88a; }
.vup { width: 0; height: 0; border: 5px solid transparent; border-bottom: 6px solid #3a5a8a; border-top: 0; margin: 10px 0 4px; }
.vthumb { width: 15px; height: 532px; background: linear-gradient(90deg, #e0ecf8, #c4d6ec); border: 1px solid #9ab4d4; }
.vtrack { flex: 1; }
.vdown { width: 0; height: 0; border: 5px solid transparent; border-top: 6px solid #3a5a8a; border-bottom: 0; margin-bottom: 5px; }
.tabbar { height: 17px; flex: none; display: flex; align-items: center; background: linear-gradient(#dce9f9, #bcd3ef); position: relative; font: 400 12.5px "Liberation Mono", "Noto Sans CJK SC", monospace; }
.tabnav { width: 66px; display: flex; justify-content: space-between; align-items: center; padding: 0 5px; border-right: 1px solid #8ca8cc; flex: none; }
.stab { white-space: nowrap; margin-left: 17.8px; flex: none; letter-spacing: -.5px; }
.first-tab { margin-left: 6px; margin-right: -3px; font: 400 15px "Noto Sans CJK SC", sans-serif; letter-spacing: 0; }
.tg { display: inline-block; width: 12px; height: 13px; border: 1px solid #15428b; font: 400 10px/11px "Noto Sans CJK SC", sans-serif; text-align: center; vertical-align: -1px; }
.sel4 { background: #fff; padding: 0 4px; margin: 0 -4px 0 13.8px; height: 17px; line-height: 16px; }
.hs { position: absolute; left: 494px; right: 0; top: 0; bottom: 0; background: #7f9ec8; display: flex; align-items: center; }
.hl { width: 0; height: 0; border: 5px solid transparent; border-right: 6px solid #3a5a8a; border-left: 0; margin-left: 9px; }
.hthumb { width: 113px; height: 15px; margin-left: 78px; background: linear-gradient(#eef2f8, #c4cedc); border: 1px solid #9ab; color: #889; font-size: 9px; text-align: center; line-height: 13px; }
.hr { width: 0; height: 0; border: 5px solid transparent; border-left: 6px solid #3a5a8a; border-right: 0; margin-left: 108px; }
.hsplit { width: 5px; height: 15px; background: #e8f0fa; margin-left: 6px; }
.status { height: 20px; flex: none; display: flex; align-items: center; background: linear-gradient(#e0edfb, #bcd3f0 50%, #d0e2f6); position: relative; border-bottom: 1px solid #8aa; }
.ready { width: 40px; padding-left: 7px; border-right: 1px solid #a9c0dc; line-height: 19px; }
.stat-r { margin-left: auto; width: 266px; height: 100%; background: linear-gradient(#c4d8f2, #9ab8e0); display: flex; align-items: center; padding-left: 4px; }
.views { display: flex; width: 57px; gap: 0; }
.vw { width: 19px; height: 19px; display: flex; align-items: center; justify-content: center; }
.vw.on { background: #f8d890; }
.zoom { margin-left: 8px; width: 38px; font-size: 12px; font-family: "Liberation Sans", sans-serif; }
.zb { width: 16px; height: 16px; margin-left: 6px; border: 1px solid #6a88b0; border-radius: 50%; background: #e4eefa; font: 700 13px/13px "Liberation Sans", sans-serif; text-align: center; flex: none; }
.zb2 { margin-left: 0; }
.slider { width: 101px; height: 1px; background: #6a88b0; position: relative; }
.slider i { position: absolute; left: 52px; top: -7px; width: 9px; height: 15px; background: #dde8f6; border: 1px solid #6a88b0; }
</style>
